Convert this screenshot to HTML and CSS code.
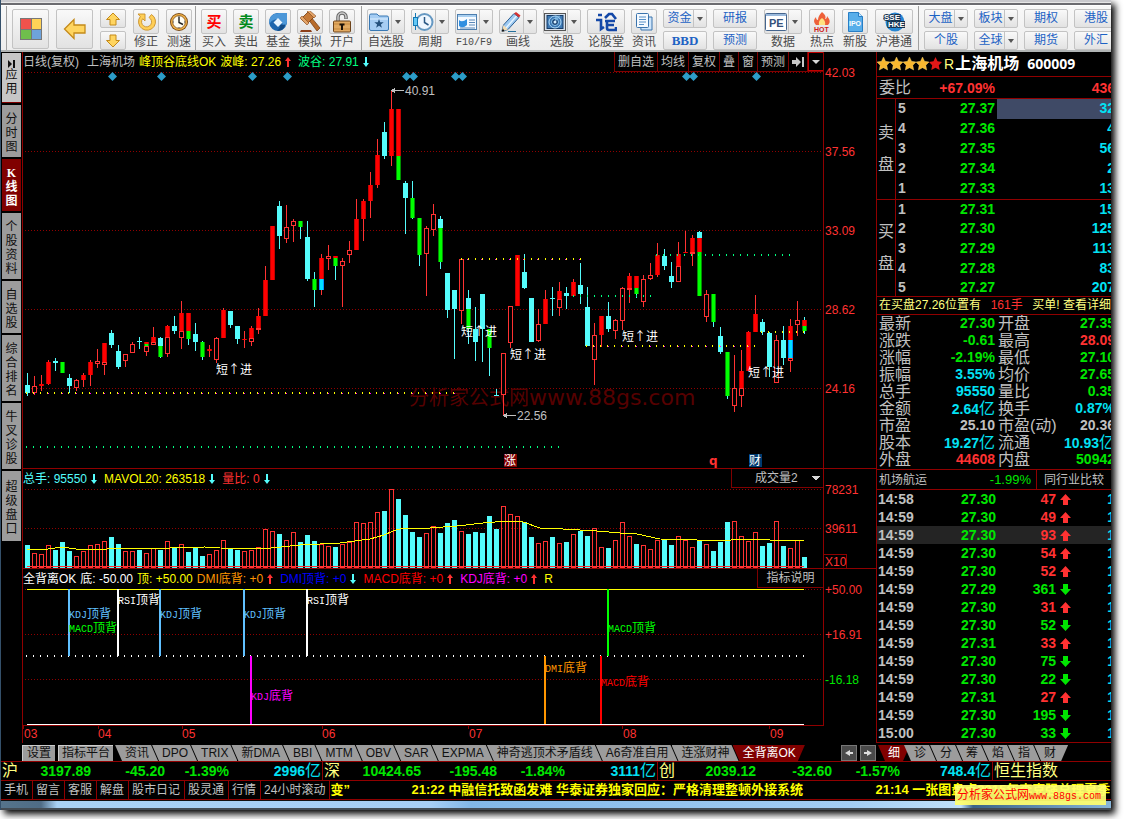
FILE: index.html
```html
<!DOCTYPE html>
<html lang="zh-CN">
<head>
<meta charset="utf-8">
<title>上海机场 600009</title>
<link rel="stylesheet" href="styles.css">
</head>
<body>
<div class="window">
  <div class="titlebar"></div>

  <header class="toolbar">
    <div class="group">
      <button class="big" aria-label="首页"><svg width="22" height="22" viewBox="0 0 22 22"><rect x="0" y="0" width="22" height="22" fill="#777"/><rect x="1" y="1" width="10" height="10" fill="#f0524c"/><rect x="12" y="1" width="9" height="10" fill="#ffd257"/><rect x="1" y="12" width="10" height="9" fill="#6fbf4c"/><rect x="12" y="12" width="9" height="9" fill="#6ea3dc"/></svg></button>
      <button class="big" aria-label="返回"><svg width="24" height="22" viewBox="0 0 24 22"><path d="M1.500 11 11 1.500V7h11v8H11v5.500z" fill="#ffd560" stroke="#c48a1a" stroke-width="1.300"/></svg></button>
      <div class="stack">
        <button class="small" aria-label="向上"><svg width="16" height="14" viewBox="0 0 16 14"><path d="M8 1 14.500 7.500H11V13H5V7.500H1.500z" fill="#ffd560" stroke="#c48a1a"/></svg></button>
        <button class="small" aria-label="向下"><svg width="16" height="14" viewBox="0 0 16 14"><path d="M8 13 14.500 6.500H11V1H5V6.500H1.500z" fill="#ffd560" stroke="#c48a1a"/></svg></button>
      </div>
      <button class="tool"><span class="face"><svg width="20" height="20" viewBox="0 0 20 20"><path d="M2 2h7v7L6.700 6.700A5 5 0 1 0 13 5.500l2.500-3A8.500 8.500 0 1 1 4.300 4.500z" fill="#ffcf57" stroke="#c8902a" stroke-width=".9"/></svg></span><span class="cap">修正</span></button>
      <button class="tool"><span class="face"><svg width="20" height="20" viewBox="0 0 20 20"><circle cx="10" cy="10" r="9" fill="#7a4a17"/><circle cx="10" cy="10" r="8" fill="#f3b548"/><circle cx="10" cy="10" r="6.300" fill="#fffdf2" stroke="#7a4a17" stroke-width=".8"/><path d="M10 5v5.500l4 2" fill="none" stroke="#222" stroke-width="1.400"/><path d="M10 4v1M10 15v1M4 10h1M15 10h1" stroke="#555"/></svg></span><span class="cap">测速</span></button>
    </div>

    <div class="group">
      <button class="tool"><span class="face glyph red">买</span><span class="cap">买入</span></button>
      <button class="tool"><span class="face glyph green">卖</span><span class="cap">卖出</span></button>
      <button class="tool"><span class="face"><svg width="20" height="20" viewBox="0 0 20 20"><path d="M9 1H19V9A9 9 0 1 1 9 1" fill="#1f66ad"/><path d="M11 1H19V9Q19 14 14 18 17 8 9 7 3 8 1.500 12 0 2 11 1z" fill="#4c97d8"/><path d="m10 6 4.500 4.500L10 15l-4.500-4.500z" fill="#e9f5ff"/><path d="M12 13q1 3-3 5.500 7 1 8.500-6z" fill="#124b86"/></svg></span><span class="cap">基金</span></button>
      <button class="tool"><span class="face"><svg width="22" height="22" viewBox="0 0 22 22"><path d="M9 8l3-2 9 11-3 3z" fill="#b86b2a" stroke="#70370e" stroke-width=".7"/><path d="M2 8 9 1l6 5-7 7z" fill="#c67a38" stroke="#70370e" stroke-width=".8"/><path d="M1 7 3 5l7 7-2 2zM8 0l2-1 7 6-2 2z" fill="#e3a469" stroke="#70370e" stroke-width=".5"/><path d="M2 19h10l1 2H1z" fill="#8e3f18"/></svg></span><span class="cap">模拟</span></button>
      <button class="tool"><span class="face"><svg width="20" height="22" viewBox="0 0 20 22"><path d="M6 11V6a4 4 0 0 1 8 0v2" fill="none" stroke="#666" stroke-width="3.500"/><path d="M6 11V6a4 4 0 0 1 8 0v1.500" fill="none" stroke="#ccc" stroke-width="1.500"/><rect x="1.500" y="10" width="17" height="11" rx="1" fill="#e2aa62" stroke="#6d431a"/><path d="M2 13h16M2 18h16" stroke="#c5873d"/><path d="M7.500 12.500h5v2H11V19H9v-4.500H7.500z" fill="#1b1108"/></svg></span><span class="cap">开户</span></button>
    </div>

    <div class="group">
      <button class="tool"><span class="face wide"><svg width="22" height="20" viewBox="0 0 22 20"><path d="M1.500 3.500q0-1.500 1.500-1.500h6l2 2h8q1.500 0 1.500 1.500V17q0 1.500-1.500 1.500H3Q1.500 18.500 1.500 17z" fill="#a6cdf3" stroke="#3878b4"/><path d="M2 7h18" stroke="#dff0ff"/><path d="m11 7 1.200 3.300h3.500l-2.800 2.100 1 3.400-2.900-2-2.900 2 1-3.400-2.800-2.100h3.500z" fill="#24507c"/></svg><span class="split"></span></span><span class="cap">自选股</span></button>
      <button class="tool"><span class="face wide"><svg width="22" height="20" viewBox="0 0 22 20"><circle cx="12.500" cy="10" r="8" fill="#eff7ff" stroke="#6598c2" stroke-width="2"/><path d="M12.500 5v5.500l4 2.500" fill="none" stroke="#2a5885" stroke-width="1.500"/><path d="M3.500 1v17" stroke="#1478b4"/><rect x="1.500" y="5.500" width="4" height="8" fill="#64c8f5" stroke="#1478b4"/></svg><span class="split"></span></span><span class="cap">周期</span></button>
      <button class="tool"><span class="face wide"><svg width="22" height="20" viewBox="0 0 22 20"><rect x="1.500" y="2.500" width="19" height="15" fill="#f5faff" stroke="#4d7eae"/><path d="M2 4h18" stroke="#a9cff0" stroke-width="2"/><path d="M3 8q3 3 8-1v6q-4 4-8 1z" fill="#318fe0"/><path d="M13 8h6M13 10.500h6M13 13h6M4 16h15" stroke="#5a88b8"/></svg><span class="split"></span></span><span class="cap mono">F10/F9</span></button>
      <button class="tool"><span class="face wide"><svg width="22" height="22" viewBox="0 0 22 22"><path d="M2 20l1.500-6L14 2.500l5 4L8 18.500z" fill="#9cc9f2" stroke="#2d5f93"/><path d="M6 17 16.500 5" stroke="#e5f4ff" stroke-width="1.500"/><path d="m14 2.500 2-1.500 4.500 3.500-1.500 2z" fill="#d53232"/><path d="M3.500 14 8 18.500 2 20z" fill="#f3dcb2"/><path d="M3 17.500 1.500 20.500h3z" fill="#111"/><path d="M8 20.500h8" stroke="#25709c"/></svg><span class="split"></span></span><span class="cap">画线</span></button>
      <button class="tool"><span class="face wide"><svg width="22" height="20" viewBox="0 0 22 20"><rect x=".5" y="1.500" width="21" height="17" fill="#d7e2ee" stroke="#555"/><rect x="3" y="3.500" width="16" height="13" fill="#3c78b4" stroke="#183c66"/><circle cx="11" cy="10" r="6" fill="none" stroke="#b3dcf8"/><circle cx="11" cy="10" r="3.500" fill="#173f70" stroke="#8ec7ef"/><path d="M11 10 16 5V3.500h-5z" fill="#8ec7ef" opacity=".6"/><circle cx="11" cy="10" r="1.500" fill="#d8f0ff"/></svg><span class="split"></span></span><span class="cap">选股</span></button>
      <button class="tool"><span class="face wide logo"><svg width="22" height="20" viewBox="0 0 22 20"><path d="M3 3h4M1 8h5v9l3-2M10 6l4-4h3l4 5M10 9h10M12 9v7q0 2 2 2h7v-3M13 13h6" fill="none" stroke="#1448a8" stroke-width="2.600"/></svg></span><span class="cap">论股堂</span></button>
      <button class="tool"><span class="face"><svg width="20" height="20" viewBox="0 0 20 20"><path d="M6 5h12v13H7z" fill="#d0e6fb" stroke="#3b74ad"/><rect x="2.500" y="1.500" width="12" height="14" rx="1" fill="#f5faff" stroke="#3b74ad"/><path d="M5 5h7M5 7.500h7M5 10h7M5 12.500h5" stroke="#5790c7"/></svg></span><span class="cap">资讯</span></button>
    </div>

    <div class="group plain">
      <div class="stack"><button class="word">资金<span class="split"></span></button><button class="word bbd">BBD</button></div>
      <div class="stack"><button class="word">研报</button><button class="word">预测</button></div>
    </div>

    <div class="group plain loose">
      <button class="tool"><span class="face wide"><svg width="22" height="20" viewBox="0 0 22 20"><rect x=".5" y="1.500" width="21" height="17" rx="1" fill="#fff" stroke="#45658e"/><path d="M1 3h20" stroke="#9ab9dc" stroke-width="2"/><text x="4" y="15" class="pe">PE</text></svg><span class="split"></span></span><span class="cap">数据</span></button>
      <button class="tool"><span class="face"><svg width="20" height="20" viewBox="0 0 20 20"><path d="M10 0q5 4 3 7 2 0 2-3 5 6 1 9H4Q0 9 4 5q0 3 2 3Q6 4 10 0z" fill="#ee6039"/><path d="M10 6q4 3 3 7H7Q6 9 10 6z" fill="#ffe280"/><text x="2" y="20" class="hot">HOT</text></svg></span><span class="cap">热点</span></button>
      <button class="tool"><span class="face"><svg width="20" height="20" viewBox="0 0 20 20"><path d="M3.500 .5h10l4 4v15h-14z" fill="#58aeea" stroke="#287ec5"/><path d="M13.500 .5v4h4" fill="#c7e7ff" stroke="#287ec5"/><text x="4" y="14" class="ipo">IPO</text></svg></span><span class="cap">新股</span></button>
      <button class="tool"><span class="face wide logo"><svg width="22" height="20" viewBox="0 0 22 20"><circle cx="12" cy="10" r="9.500" fill="#2786d2"/><path d="M8 3q7-3 10 3-5 3-10-3" fill="#8bd0f5"/><text x="1" y="8" class="sse">SSE</text><text x="5" y="15" class="sse">HKE</text></svg></span><span class="cap">沪港通</span></button>
    </div>

    <div class="group">
      <div class="stack"><button class="word">大盘<span class="split"></span></button><button class="word">个股</button></div>
      <div class="stack"><button class="word">板块<span class="split"></span></button><button class="word">全球<span class="split"></span></button></div>
      <div class="stack"><button class="word">期权</button><button class="word">期货</button></div>
      <div class="stack"><button class="word">港股</button><button class="word">外汇</button></div>
    </div>
  </header>

  <main class="main">
    <nav class="side">
      <button class="side-btn light"><svg width="8" height="8" viewBox="0 0 8 8"><path d="M0 0l4 4-4 4zM5 0h2v8H5z" fill="#111"/></svg>应用</button>
      <button class="side-btn">分时图</button>
      <button class="side-btn active">K线图</button>
      <button class="side-btn">个股资料</button>
      <button class="side-btn">自选股</button>
      <button class="side-btn">综合排名</button>
      <button class="side-btn">牛叉诊股</button>
      <button class="side-btn">超级盘口</button>
    </nav>

    <div class="charts">
      <section class="panel">
        <div class="panel-head">
          <span class="grey period">日线(复权)</span><span class="grey">上海机场</span><span class="yellow">峰顶谷底线OK</span>
          <span class="yellow">波峰: 27.26</span><svg class="tip" width="6" height="10" viewBox="0 0 6 10"><path d="M3 0 6 4H4v6H2V4H0z" fill="#ff3232"/></svg>
          <span class="spring">波谷: 27.91</span><svg class="tip" width="6" height="10" viewBox="0 0 6 10"><path d="M3 10 6 6H4V0H2v6H0z" fill="#54fcfc"/></svg>
          <div class="chart-tools">
            <button>删自选</button><button>均线</button><button>复权</button><button>叠</button><button>窗</button><button>预测</button>
            <button aria-label="移到最右"><svg width="12" height="10" viewBox="0 0 12 10"><path d="M0 3h4V0l5 5-5 5V7H0zM10 0h2v10h-2z" fill="#c8c8c8"/></svg></button>
            <button class="more" aria-label="更多"><svg width="8" height="4" viewBox="0 0 8 4"><path d="M0 0h8L4 4z" fill="#d8d8d8"/></svg></button>
          </div>
        </div>
        <svg class="plot" viewBox="23 72 853 396">
          <path class="frame" d="M823.500 52V468"/>
          <path class="grid" d="M25 72.500H821M25 151.500H821M25 230.500H821M25 309.500H821M25 388.500H821"/>
          <text class="mark" x="409" y="405">分析家公式网<tspan class="mark-latin">www.88gs.com</tspan></text>
          <g class="gem" id="gems"></g>
          <g id="candles"></g>
          <path class="dots gold" d="M26 393H455M461 259H582M586 346H757M761 332H806"/>
          <path class="dots pink" d="M34 393.500H455M467 259.500H582M594 346.500H757"/>
          <path class="dots mint" d="M26 447H562M573 296H652M656 255H792"/>
          <path d="M392 90.500h12M504 415.500h12" stroke="#c0c0c0"/>
          <path d="M391 90.500l4-3v6zM503 415.500l4-3v6z" fill="#c0c0c0"/>
          <g class="note"><text x="405" y="95">40.91</text><text x="517" y="420">22.56</text></g>
          <g class="signal"><text x="216" y="374">短↑进</text><text x="461" y="336">短↑进</text><text x="510" y="359">短↑进</text><text x="622" y="341">短↑进</text><text x="748" y="377">短↑进</text></g>
          <rect x="504" y="454" width="13" height="13" fill="#800000"/><rect x="749" y="454" width="13" height="13" fill="#003a70"/>
          <g class="signal"><text x="504" y="465">涨</text><text x="749" y="465">财</text></g>
          <text class="q" x="709" y="465">q</text>
          <g class="scale"><text x="825" y="77">42.03</text><text x="825" y="156">37.56</text><text x="825" y="235">33.09</text><text x="825" y="314">28.62</text><text x="825" y="393">24.16</text></g>
        </svg>
      </section>

      <section class="panel ruled">
        <div class="panel-head">
          <span class="cyan">总手: 95550</span><svg class="tip" width="6" height="10" viewBox="0 0 6 10"><path d="M3 10 6 6H4V0H2v6H0z" fill="#54fcfc"/></svg>
          <span class="yellow">MAVOL20: 263518</span><svg class="tip" width="6" height="10" viewBox="0 0 6 10"><path d="M3 10 6 6H4V0H2v6H0z" fill="#54fcfc"/></svg>
          <span class="scarlet">量比: 0</span><svg class="tip" width="6" height="10" viewBox="0 0 6 10"><path d="M3 10 6 6H4V0H2v6H0z" fill="#54fcfc"/></svg>
          <select class="picker" aria-label="指标"><option>成交量2</option></select>
        </div>
        <svg class="plot" viewBox="23 489 853 79">
          <path class="frame" d="M823.500 469V568M824 554.500H846.500V568"/>
          <path class="grid" d="M25 489.500H821M25 528.500H821"/>
          <g id="volumes"></g>
          <path d="M27 566.500H804" stroke="#ff3232"/>
          <polyline class="average" points="27,549 48,549 62,547 76,549 97,550 118,548 145,549 170,548 205,547 220,548 262,549 300,545 340,543 370,539 384,535 393,531 403,528 418,529 430,528 457,526 483,523 507,521 523,522 540,528 563,529 597,531 620,533 637,534 660,539 697,540 720,541 743,539 770,540 804,540"/>
          <g class="scale"><text x="825" y="494">78231</text><text x="825" y="533">39611</text><text x="825" y="566">X10</text></g>
        </svg>
      </section>

      <section class="panel ruled">
        <div class="panel-head">
          <span class="white">全背离OK</span><span class="white">底: -50.00</span><span class="yellow">顶: +50.00</span>
          <span class="orange">DMI底背: +0</span><svg class="tip" width="6" height="10" viewBox="0 0 6 10"><path d="M3 0 6 4H4v6H2V4H0z" fill="#ff3232"/></svg>
          <span class="blue">DMI顶背: +0</span><svg class="tip" width="6" height="10" viewBox="0 0 6 10"><path d="M3 10 6 6H4V0H2v6H0z" fill="#54fcfc"/></svg>
          <span class="pure-red">MACD底背: +0</span><svg class="tip" width="6" height="10" viewBox="0 0 6 10"><path d="M3 0 6 4H4v6H2V4H0z" fill="#ff3232"/></svg>
          <span class="magenta">KDJ底背: +0</span><svg class="tip" width="6" height="10" viewBox="0 0 6 10"><path d="M3 0 6 4H4v6H2V4H0z" fill="#ff3232"/></svg>
          <span class="yellow">R</span>
          <button class="explain">指标说明</button>
        </div>
        <svg class="plot" viewBox="23 589 853 154">
          <path class="frame" d="M823.500 569V725.500M23 725.500H824M23.500 726v3M98.500 726v3M182.500 726v3M322.500 726v3M468.500 726v3M622.500 726v3M769.500 726v3"/>
          <path class="grid" d="M25 589.500H821M25 634.500H821M25 679.500H821"/>
          <path d="M27 589.500H804" stroke="#ff0"/>
          <path d="M27 724.500H804" stroke="#fff"/>
          <path class="dots" stroke="#fff" d="M26 656H805"/>
          <path class="bar" stroke="#60c0ff" d="M69 589V656M160 589V656M244 589V656"/>
          <path class="bar" stroke="#fff" d="M118 589V656M307 589V656"/>
          <path class="bar" stroke="#f0f" d="M251 656V724"/>
          <path class="bar" stroke="#0f0" d="M608 589V656"/>
          <path class="bar" stroke="#ff9600" d="M545 656V724"/>
          <path class="bar" stroke="#f00" d="M601 656V724"/>
          <g class="tag">
            <text fill="#60c0ff" x="69" y="618"><tspan>KDJ</tspan>顶背</text>
            <text fill="#0f0" x="69" y="632"><tspan>MACD</tspan>顶背</text>
            <text fill="#fff" x="118" y="604"><tspan>RSI</tspan>顶背</text>
            <text fill="#60c0ff" x="160" y="618"><tspan>KDJ</tspan>顶背</text>
            <text fill="#60c0ff" x="244" y="618"><tspan>KDJ</tspan>顶背</text>
            <text fill="#fff" x="307" y="604"><tspan>RSI</tspan>顶背</text>
            <text fill="#f0f" x="251" y="700"><tspan>KDJ</tspan>底背</text>
            <text fill="#0f0" x="608" y="632"><tspan>MACD</tspan>顶背</text>
            <text fill="#ff9600" x="545" y="672"><tspan>DMI</tspan>底背</text>
            <text fill="#f00" x="601" y="686"><tspan>MACD</tspan>底背</text>
          </g>
          <g class="scale"><text x="825" y="594">+50.00</text><text x="825" y="639">+16.91</text><text class="down" x="825" y="684">-16.18</text>
          <text x="24" y="738">03</text><text x="98" y="738">04</text><text x="182" y="738">05</text><text x="322" y="738">06</text><text x="469" y="738">07</text><text x="623" y="738">08</text><text x="770" y="738">09</text></g>
        </svg>
      </section>
    </div>

    <aside class="quote">
      <div class="stock">
        <svg width="66" height="14" viewBox="0 0 66 14"><defs><path id="star" d="M6.500 0 8.500 4.300 13 5 9.800 8.200 10.700 13 6.500 10.700 2.300 13 3.200 8.200 0 5 4.500 4.300z"/></defs><g fill="#f8b830" stroke="#ffe080" stroke-width=".4"><use href="#star"/><use href="#star" x="13"/><use href="#star" x="26"/><use href="#star" x="39"/></g><use href="#star" x="52" fill="#e01818"/></svg>
        <span class="flag">R</span><span class="name">上海机场</span><span class="code">600009</span>
      </div>
      <div class="ratio"><span class="label">委比</span><b class="scarlet">+67.09%</b><b class="scarlet">436</b></div>
      <table class="book">
        <colgroup><col class="c-side"><col class="c-level"><col class="c-price"><col></colgroup>
        <tbody>
          <tr><th rowspan="5">卖<br>盘</th><td>5</td><td class="lime">27.37</td><td class="aqua hit">32</td></tr>
          <tr><td>4</td><td class="lime">27.36</td><td class="aqua">4</td></tr>
          <tr><td>3</td><td class="lime">27.35</td><td class="aqua">56</td></tr>
          <tr><td>2</td><td class="lime">27.34</td><td class="aqua">2</td></tr>
          <tr><td>1</td><td class="lime">27.33</td><td class="aqua">13</td></tr>
        </tbody>
        <tbody class="buy">
          <tr><th rowspan="5">买<br>盘</th><td>1</td><td class="lime">27.31</td><td class="aqua">15</td></tr>
          <tr><td>2</td><td class="lime">27.30</td><td class="aqua">125</td></tr>
          <tr><td>3</td><td class="lime">27.29</td><td class="aqua">113</td></tr>
          <tr><td>4</td><td class="lime">27.28</td><td class="aqua">83</td></tr>
          <tr class="last"><td>5</td><td class="lime">27.27</td><td class="aqua">207</td></tr>
        </tbody>
      </table>
      <div class="notice"><span>在买盘27.26位置有</span><span class="scarlet">161手</span><span>买单! 查看详细</span></div>
      <dl class="stats">
        <dt>最新</dt><dd class="lime">27.30</dd><dt>开盘</dt><dd class="lime">27.35</dd>
        <dt>涨跌</dt><dd class="lime">-0.61</dd><dt>最高</dt><dd class="scarlet">28.09</dd>
        <dt>涨幅</dt><dd class="lime">-2.19%</dd><dt>最低</dt><dd class="lime">27.10</dd>
        <dt>振幅</dt><dd class="aqua">3.55%</dd><dt>均价</dt><dd class="lime">27.65</dd>
        <dt>总手</dt><dd class="aqua">95550</dd><dt>量比</dt><dd class="lime">0.35</dd>
        <dt>金额</dt><dd class="aqua">2.64<i>亿</i></dd><dt>换手</dt><dd class="aqua">0.87%</dd>
        <dt>市盈</dt><dd>25.10</dd><dt>市盈(动)</dt><dd>20.36</dd>
        <dt>股本</dt><dd class="aqua">19.27<i>亿</i></dd><dt>流通</dt><dd class="aqua">10.93<i>亿</i></dd>
        <dt>外盘</dt><dd class="scarlet">44608</dd><dt>内盘</dt><dd class="lime">50942</dd>
      </dl>
      <div class="sector"><span>机场航运</span><span class="change">-1.99%</span><button>同行业比较</button></div>
      <table class="ticks"><colgroup><col class="t-time"><col class="t-price"><col class="t-vol"><col class="t-dir"><col></colgroup><tbody id="ticks"></tbody></table>
    </aside>
  </main>

  <div class="tabstrip">
    <button class="box first">设置</button><button class="box">指标平台</button>
    <div class="tabs">
      <button>资讯</button><button>DPO</button><button>TRIX</button><button>新DMA</button><button>BBI</button><button>MTM</button><button>OBV</button><button>SAR</button><button>EXPMA</button><button>神奇逃顶术矛盾线</button><button>A6奇准自用</button><button>连涨财神</button><button class="on">全背离OK</button>
    </div>
    <div class="pager"><button aria-label="上一页"><svg width="8" height="6" viewBox="0 0 8 6"><path d="M0 3 5 0v2h3v2H5v2z" fill="#ddd"/></svg></button><button aria-label="下一页"><svg width="8" height="6" viewBox="0 0 8 6"><path d="M8 3 3 0v2H0v2h3v2z" fill="#ddd"/></svg></button></div>
    <div class="tabs quote-tabs">
      <button class="on">细</button><button>诊</button><button>分</button><button>筹</button><button>焰</button><button>指</button><button class="end">财</button>
    </div>
  </div>

  <div class="indices">
    <div class="index first"><span>沪</span><b>3197.89</b><b>-45.20</b><b>-1.39%</b><b class="aqua">2996<i>亿</i></b></div>
    <div class="index"><span>深</span><b>10424.65</b><b>-195.48</b><b>-1.84%</b><b class="aqua">3111<i>亿</i></b></div>
    <div class="index"><span>创</span><b>2039.12</b><b>-32.60</b><b>-1.57%</b><b class="aqua">748.4<i>亿</i></b></div>
    <div class="index tail"><span>恒生指数</span></div>
  </div>

  <footer class="ticker">
    <button>手机</button><button>留言</button><button>客服</button><button>解盘</button><button>股市日记</button><button>股灵通</button><button>行情</button><button>24小时滚动</button>
    <div class="news"><span class="cut">变”</span><span class="story">21:22 中融信托致函发难 华泰证券独家回应：严格清理整顿外接系统</span><span>21:14 一张图盘点2015年李克强总理夏季达</span></div>
  </footer>
  <div class="frame-bottom"></div>
  <div class="stamp">分析家公式网<span>www.88gs.com</span></div>
</div>
<script src="chart.js"></script>
</body>
</html>
```
FILE: styles.css
```css
* { box-sizing: border-box; }
body {
  margin: 0;
  padding: 0 13px 11px 0;
  overflow: hidden;
  background: #fff;
  color: #c0c0c0;
  font: 12px/16px "Liberation Sans", "Noto Sans CJK SC", sans-serif;
}
button, select { margin: 0; padding: 0; border: 0; background: none; color: inherit; font: inherit; white-space: nowrap; }
svg { display: block; flex: none; }
i { font-style: normal; font-weight: 400; font-size: 16px; }

.window {
  position: relative;
  background: #000;
  border-left: 1px solid #34506a;
  box-shadow: 4px 4px 7px #000;
}
.titlebar { height: 6px; background: linear-gradient(#c9c9cd 0 2px, #e6e6e6 2px 3px, #6b6b70 3px 5px, #fff 5px); }

/* toolbar */
.toolbar {
  display: flex;
  height: 46px;
  overflow: hidden;
  background: linear-gradient(#f8f8f8, #ededed);
  border-bottom: 2px solid #b0b4b4;
  color: #4a4a4a;
}
.group { display: flex; flex: none; gap: 6px; padding: 3px 5px 0 5px; border-left: 1px solid #a0a0a0; margin-left: 5px; }
.group + .group { margin-left: 1px; }
.group:first-child { gap: 7px; padding-right: 2px; }
.group.plain { border-left: 0; margin-left: 0; padding: 3px 0 0 1px; }
.group.loose { gap: 7px; padding: 3px 4px 0 7px; }
.big, .small, .face, .word {
  display: flex;
  align-items: center;
  justify-content: center;
  border: 1px solid #c3c3c3;
  border-radius: 2px;
  background: linear-gradient(#f9f9f9, #e2e2e2);
}
.big { width: 37px; height: 40px; }
.stack { display: flex; flex-direction: column; gap: 3px; }
.small { width: 26px; height: 19px; }
.word { width: 44px; height: 19px; color: #1c62c4; line-height: 17px; }
.word:has(.split) { padding-left: 3px; }
.bbd { font-family: "Liberation Serif", serif; font-weight: 700; font-size: 13px; }
.tool { display: flex; flex-direction: column; align-items: center; }
.face { flex: none; width: 26px; height: 25px; }
.face.wide { width: 38px; }
.cap { flex: none; height: 15px; margin-top: 1px; line-height: 15px; }
.mono { font-family: "Liberation Mono", monospace; font-size: 10px; }
.split { display: flex; align-items: center; justify-content: center; align-self: stretch; width: 13px; margin-left: 1px; border-left: 1px solid #c3c3c3; }
.split::after { content: ""; border: 3px solid transparent; border-top: 4px solid #555; border-bottom: 0; }
.glyph { font-weight: 700; font-size: 15px; }
.red { color: #f00; }
.green { color: #008a1c; }
.pe { font: 700 11px "Liberation Sans", sans-serif; fill: #35527c; }
.hot { font: 700 7px "Liberation Sans", sans-serif; fill: #d02020; }
.ipo { font: 700 7px "Liberation Sans", sans-serif; fill: #fff; }
.sse { font: 700 8px "Liberation Sans", sans-serif; fill: #fff; stroke: #16324f; stroke-width: 2px; paint-order: stroke; }

/* main area */
.main { display: grid; grid-template-columns: 21px minmax(0, 1fr) 235px; }
.side { display: flex; flex-direction: column; gap: 2px; padding: 1px 1px 0; }
.side-btn {
  display: flex;
  flex-direction: column;
  align-items: center;
  padding: 7px 3px 3px;
  background: #9c9c9c;
  color: #111;
  line-height: 14px;
  white-space: normal;
  word-break: break-all;
}
.side-btn.light { padding: 7px 3px 6px; background: #c6c6c6; border-bottom: 1px solid #800000; }
.side-btn.active { background: #800000; color: #fff; font-family: "Liberation Serif", "Noto Sans CJK SC", serif; font-weight: 700; }
.side-btn:last-child { padding: 9px 3px 5px; }

.panel { border-left: 1px solid #900000; }
.ruled { border-top: 1px solid #900000; }
.panel-head { display: flex; align-items: center; gap: 4px; height: 20px; padding-right: 52px; white-space: nowrap; }
.period { margin-right: 4px; }
.tip { margin-right: 3px; }
.chart-tools { display: flex; margin-left: auto; height: 20px; border-left: 1px solid #800000; border-bottom: 1px solid #800000; }
.chart-tools button { display: flex; align-items: center; padding: 0 3px; border-right: 1px solid #800000; }
.chart-tools .more { border: 1px solid #c00000; }
.picker {
  appearance: none;
  margin-left: auto;
  align-self: flex-start;
  width: 93px;
  height: 19px;
  padding-left: 23px;
  border: 1px solid #800000;
  border-top: 0;
  background:
    linear-gradient(#d8d8d8, #d8d8d8) 80px 7px / 8px 1px no-repeat,
    linear-gradient(#d8d8d8, #d8d8d8) 81px 8px / 6px 1px no-repeat,
    linear-gradient(#d8d8d8, #d8d8d8) 82px 9px / 4px 1px no-repeat,
    linear-gradient(#d8d8d8, #d8d8d8) 83px 10px / 2px 1px no-repeat;
  color: #c0c0c0;
}
.explain { margin-left: auto; align-self: flex-start; width: 67px; height: 19px; border: 1px solid #800000; border-top: 0; }

.grey { color: #c0c0c0; }
.white { color: #fff; }
.yellow { color: #ff0; }
.spring { color: #00ff80; }
.cyan { color: #54fcfc; }
.scarlet { color: #ff3232; }
.orange { color: #ff9600; }
.blue { color: #00f; }
.pure-red { color: #f00; }
.magenta { color: #f0f; }
.lime { color: #00e600; }
.aqua { color: #02e2f4; }

.plot { width: 100%; height: auto; overflow: visible; shape-rendering: crispEdges; }
.frame { fill: none; stroke: #900000; }
.grid { fill: none; stroke: #900000; stroke-dasharray: 1 2; }
.dots { fill: none; stroke-width: 2; stroke-dasharray: 1 6; }
.gold { stroke: #ff0; }
.pink { stroke: #f0f; stroke-width: 1; stroke-dasharray: 1 13; }
.mint { stroke: #00ff80; }
.bar { stroke-width: 2; }
.average { fill: none; stroke: #ff0; }
.gem { fill: #2c9cc8; shape-rendering: auto; }
.scale { fill: #ff3232; }
.down { fill: #00e600; }
.note { fill: #c0c0c0; }
.signal { fill: #fff; font-family: "Noto Sans CJK SC", sans-serif; }
.mark { fill: #560000; font-size: 20px; }
.mark-latin { font-family: "DejaVu Sans", sans-serif; font-size: 22px; }
.q { fill: #ff3232; font-family: "DejaVu Sans", sans-serif; font-weight: 700; }
.tag tspan { font-family: "Liberation Mono", monospace; font-size: 10px; }

/* quote panel */
.quote { border-left: 1px solid #900000; overflow: hidden; font-size: 14px; }
.stock { display: flex; align-items: center; height: 25px; padding-bottom: 1px; border-bottom: 1px solid #900000; white-space: nowrap; }
.flag { margin-left: 1px; color: #ffff80; }
.name { margin-left: 1px; color: #fff; font-size: 16px; font-weight: 700; }
.code { margin-left: 8px; color: #fff; font-family: "Open Sans", sans-serif; font-weight: 700; }
.label { font-size: 16px; }
.ratio { display: grid; grid-template-columns: 40px 76px 1fr; align-items: center; height: 22px; margin-right: -4px; padding-left: 2px; border-bottom: 1px solid #900000; text-align: right; }
.ratio .label { text-align: left; }
.book, .ticks { width: calc(100% + 4px); table-layout: fixed; border-collapse: separate; border-spacing: 0; font-weight: 700; }
.c-side { width: 19px; }
.c-level { width: 22px; }
.c-price { width: 79px; }
.book th { padding: 0; border-right: 1px solid #900000; font-size: 16px; font-weight: 400; line-height: 32px; }
.book tr { height: 20px; }
.book tr.last { height: 17px; }
.book td { padding: 0 0 2px 2px; text-align: right; line-height: 16px; }
.book tr.last td { padding-bottom: 1px; }
.book td.lime { padding-right: 2px; }
.book td:not(.lime, .aqua) { text-align: left; }
.book .hit { background: #3f4a66; }
.buy tr:first-child th, .buy tr:first-child td { border-top: 1px solid #900000; }
.notice { display: flex; justify-content: space-between; height: 19px; padding: 0 0 0 2px; border: solid #900000; border-width: 1px 0; color: #ffff80; font-size: 12px; line-height: 17px; white-space: nowrap; }
.stats { display: grid; grid-template-columns: 44px 72px 62px 1fr; grid-auto-rows: 17px; margin: 0 -4px 0 0; padding: 0 0 1px 2px; line-height: 17px; font-weight: 700; }
.stats dt { font-size: 16px; font-weight: 400; white-space: nowrap; }
.stats dt:nth-of-type(even) { padding-left: 3px; }
.stats dd { margin: 0; text-align: right; white-space: nowrap; }
.sector { display: flex; height: 21px; padding-left: 2px; border: solid #900000; border-width: 1px 0; font-size: 12px; line-height: 20px; }
.change { flex: 1; padding-right: 5px; color: #00e600; font-size: 13px; text-align: right; }
.sector button { width: 75px; border-left: 1px solid #900000; }
.ticks { border-bottom: 1px solid #900000; }
.ticks tr { height: 18px; }
.ticks td { padding: 0; text-align: right; line-height: 16px; }
.ticks td:first-child { padding-left: 1px; text-align: left; }
.ticks .now { background: #242424; }
.ticks svg { margin-left: 4px; }
.t-time { width: 50px; }
.t-price { width: 69px; }
.t-vol { width: 60px; }
.t-dir { width: 20px; }

/* indicator tabs */
.tabstrip { display: flex; align-items: flex-end; height: 18px; padding-left: 21px; line-height: 16px; }
.box { height: 16px; padding: 0 3px; background: #9c9c9c; border: solid #ccc; border-width: 1px 0 0 1px; color: #111; line-height: 15px; }
.box.first { margin-right: 3px; padding: 0 4px; }
.tabs { display: flex; margin-left: 2px; color: #111; }
.tabs button { height: 16px; margin-right: -6px; padding: 0 9px 0 10px; background: #9c9c9c; clip-path: polygon(0 0, calc(100% - 7px) 0, 100% 100%, 7px 100%); }
.tabs .on { background: #800000; color: #fff; clip-path: polygon(0 0, 100% 0, calc(100% - 7px) 100%, 7px 100%); }
.quote-tabs button { padding: 0 10px; }
.tabs .end { padding-right: 12px; clip-path: polygon(0 0, 100% 0, calc(100% - 7px) 100%, 7px 100%); }
.pager { display: flex; gap: 3px; margin-left: auto; }
.pager button { display: flex; align-items: center; justify-content: center; width: 16px; height: 16px; background: #4a4a4a; border: 1px solid #777; }
.quote-tabs { width: 233px; }

/* index line and news line */
.indices { display: flex; height: 20px; border: solid #900000; border-width: 1px 0; overflow: hidden; font-size: 14px; line-height: 18px; white-space: nowrap; }
.index { display: grid; grid-template-columns: 20px 77px 76px 68px 1fr; flex: 0 1 335px; padding: 0 1px; border-right: 1px solid #900000; text-align: right; color: #00e600; }
.index.first { grid-template-columns: 20px 69px 74px 64px 1fr; flex-basis: 322px; }
.index.tail { display: block; flex: 1; border: 0; text-align: left; }
.index span { color: #ffff80; font-size: 16px; text-align: left; }
.index .aqua { color: #02e2f4; }
.ticker { display: flex; height: 19px; border-bottom: 1px solid #900000; line-height: 18px; }
.ticker button { flex: none; padding: 0 4px 0 3px; border-right: 1px solid #900000; }
.news { display: flex; flex: 1; min-width: 0; overflow: hidden; color: #ff0; font-size: 13px; font-weight: 700; white-space: nowrap; margin-right: 1px; }
.news span { flex: none; }
.news .cut { width: 81px; }
.news .story { width: 464px; }
.frame-bottom { height: 10px; border-top: 1px solid #111; border-bottom: 2px solid #444c54; background: linear-gradient(90deg, #55748c 0, #4f6c86 40px, #a8d2f6 56px, #a6cef5 430px, #82b8e8 470px, #a4cef4 850px, #bfe0fa 960px, #3a6488 972px, #88b6da); }
.stamp { position: absolute; right: 5px; bottom: 5px; height: 20px; padding: 0 5px 0 2px; background: rgba(255, 255, 110, .93); color: #f00; line-height: 20px; white-space: nowrap; }
.stamp span { font-family: "Liberation Mono", monospace; font-size: 10px; }
```
FILE: chart.js
```js
const NS = 'http://www.w3.org/2000/svg';
const FIRST = 27, STEP = 7;
const RED = '#ff3232', CYAN = '#54fcfc';

function add(parent, name, attrs) {
  const el = document.createElementNS(NS, name);
  for (const key in attrs) el.setAttribute(key, attrs[key]);
  parent.appendChild(el);
}

// One day per entry: wick colour, wick top, wick bottom, then body parts (kind, top, bottom).
const days = `
c 373 396 c 385 393|r 376 395 r 386 393|r 375 391 R 384 386|r 360 385 R 362 384|c 358 371 c 361 363|c 362 373 g 362 373
c 374 393 c 378 386|r 379 391 r 380 388|r 373 387 R 375 380|r 360 386 R 362 375|r 349 368 r 361 364|r 343 375 R 343 362 r 362 365
c 330 348 c 333 345|c 345 369 c 351 367|r 354 367 r 354 361|r 342 353 r 344 353|c 337 349 c 341 342|r 342 356 R 342 344 g 344 346 r 346 352
r 327 345 R 337 342 r 342 345|c 337 358 c 338 346 g 346 357|r 325 357 R 326 337 r 337 354|c 316 334 c 326 331|r 301 349 R 313 331 r 331 338
c 325 345 R 313 331 g 331 339|c 323 351 c 334 342|c 341 360 g 342 357|r 345 357 R 349 351|r 337 363 r 338 360|r 308 338 R 310 338
c 311 328 c 311 325|c 326 344 c 326 339|r 331 348 R 339 340|r 326 346 R 328 338 r 338 342|r 308 334 R 316 328 r 328 329
r 266 316 R 280 316|r 226 280 R 226 280|c 201 249 c 206 236|r 205 243 r 227 239|r 219 242 r 221 226|c 221 239 g 221 227
c 221 281 c 237 279|c 272 307 g 279 290|r 254 295 R 258 279 b 279 290|r 245 270 r 256 259|c 256 280 R 256 258 g 258 266
r 258 307 r 261 266|r 241 263 r 250 255|r 199 250 R 219 250|r 199 241 R 201 219|r 172 218 R 185 201|r 139 188 R 155 185
c 122 159 c 132 156|r 91 166 R 109 156|c 124 180 R 109 156 g 156 180|c 181 234 c 183 198|c 181 219 g 198 218|c 218 266 g 218 255
r 226 296 r 228 254|r 204 236 r 214 230|c 216 269 c 219 228 g 228 262|c 273 318 c 273 310|c 290 359 c 290 309|r 259 324 r 259 311
c 290 344 c 298 309 g 309 329|c 307 361 c 329 342|c 294 362 c 294 329|c 329 376 g 329 348|c 389 395 c 395 396|r 353 416 r 353 395
r 306 348 r 306 343|r 255 306 R 255 306|c 254 289 c 272 288|c 298 342 c 298 342|r 309 342 r 324 341|r 290 324 R 299 324
c 287 316 c 298 299|r 282 316 R 291 299 r 299 308|c 287 309 c 293 296|r 279 297 R 282 296|c 263 304 c 285 294|c 287 346 c 307 346
r 323 385 r 335 360|r 316 347 R 316 335|c 302 332 c 316 329|r 319 339 r 320 331|r 287 330 r 288 321|r 273 303 R 276 288 r 288 290
c 279 298 R 276 288 g 288 294|r 275 307 r 279 302|r 263 280 r 275 279|r 243 277 R 255 275|c 249 270 c 256 266|c 262 288 c 276 282
r 242 282 R 254 266 r 266 282|r 231 253 R 252 253|r 235 266 R 238 252 r 252 254|c 231 296 c 232 238 R 238 252 g 252 296
r 290 322 r 294 317|c 294 327 g 294 322|c 327 354 c 336 352|c 352 399 g 352 396|r 355 412 r 388 406|r 350 407 R 371 388 r 388 396
r 331 371 R 332 371|r 295 332 R 314 332|c 319 335 c 322 332|c 332 377 c 333 367|r 335 383 r 340 383|c 326 365 c 340 358
r 319 372 R 326 340 b 340 358 r 358 361|r 301 336 r 320 325|c 317 334 R 320 326 g 326 331`.trim().split(/[|\n]/);

const fills = { R: ['#c40000', '#ff0000'], g: ['#009000', '#00ff00'], b: ['#0090ff', '#00e0ff'] };
const candles = document.getElementById('candles');
days.forEach((line, i) => {
  const f = line.split(' ');
  const x = FIRST + STEP * i;
  add(candles, 'rect', { x, y: f[1], width: 1, height: f[2] - f[1], fill: f[0] === 'r' ? RED : CYAN });
  for (let k = 3; k < f.length; k += 3) {
    const top = +f[k + 1], h = f[k + 2] - top;
    if (f[k] === 'c') {
      add(candles, 'rect', { x: x - 2, y: top, width: 5, height: h, fill: CYAN });
    } else if (f[k] === 'r') {
      add(candles, 'rect', { x: x - 1.5, y: top + 0.5, width: 4, height: Math.max(h - 1, 1), fill: '#000', stroke: RED });
    } else {
      add(candles, 'rect', { x: x - 2, y: top, width: 5, height: h, fill: fills[f[k]][0] });
      add(candles, 'rect', { x: x - 1, y: top, width: 3, height: h, fill: fills[f[k]][1] });
    }
  }
});

// Volume bars: r for a rising day, c for a falling one, followed by the bar's top.
const volumes = 'c545 r553 r554 r545 c550 c542 c551 r556 r551 r545 r544 r541 c537 c544 r551 r551 c550 r553 r548 c550 r541 c548 r544 c552 c548 c556 r554 r550 r540 c549 c550 r551 r550 r547 r529 r531 c534 r540 r532 c542 c535 c541 r544 r546 c547 r544 r542 r522 r523 r522 r512 c511 r489 c499 c515 c532 c537 r533 r526 c533 c523 c520 r531 c534 c532 c533 c516 c529 r506 r514 r516 c522 c537 r543 r541 c537 r543 c542 r534 c531 c536 r528 r547 c548 r540 r522 r536 c544 r545 r549 r540 c540 c545 r536 r540 r547 c541 r544 c551 c542 c522 r521 r536 r541 r532 c546 c543 r521 c546 r548 r540 c557'.split(' ');
const volumeGroup = document.getElementById('volumes');
volumes.forEach((v, i) => {
  const x = FIRST + STEP * i, top = +v.slice(1);
  if (v[0] === 'c') add(volumeGroup, 'rect', { x: x - 2, y: top, width: 5, height: 568 - top, fill: CYAN });
  else add(volumeGroup, 'rect', { x: x - 1.5, y: top + 0.5, width: 4, height: 567 - top, fill: 'none', stroke: RED });
});

const gems = document.getElementById('gems');
[112, 161, 252, 287, 406, 413, 455, 462, 686, 693, 756].forEach(x => {
  add(gems, 'path', { d: `M${x + 0.5} 72l4.500 4.500-4.500 4.500-4.500-4.500z` });
});

const trades = [
  ['14:58', '27.30', 47, 1], ['14:59', '27.30', 49, 1], ['14:59', '27.30', 93, 1], ['14:59', '27.30', 54, 1],
  ['14:59', '27.30', 52, 1], ['14:59', '27.29', 361, 0], ['14:59', '27.30', 31, 1], ['14:59', '27.30', 52, 0],
  ['14:59', '27.31', 33, 1], ['14:59', '27.30', 75, 0], ['14:59', '27.30', 22, 0], ['14:59', '27.31', 27, 1],
  ['14:59', '27.30', 195, 0], ['15:00', '27.30', 33, 0]
];
document.getElementById('ticks').innerHTML = trades.map(([time, price, vol, up], i) => {
  const path = up ? 'M5.500 0 11 6H8v5H3V6H0z' : 'M5.500 11 11 5H8V0H3v5H0z';
  const fill = up ? RED : '#00e600';
  return `<tr${i === 2 ? ' class="now"' : ''}><td>${time}</td><td class="lime">${price}</td>` +
    `<td class="${up ? 'scarlet' : 'lime'}">${vol}</td>` +
    `<td><svg width="11" height="11" viewBox="0 0 11 11"><path d="${path}" fill="${fill}"/></svg></td><td class="aqua">1</td></tr>`;
}).join('');
```
